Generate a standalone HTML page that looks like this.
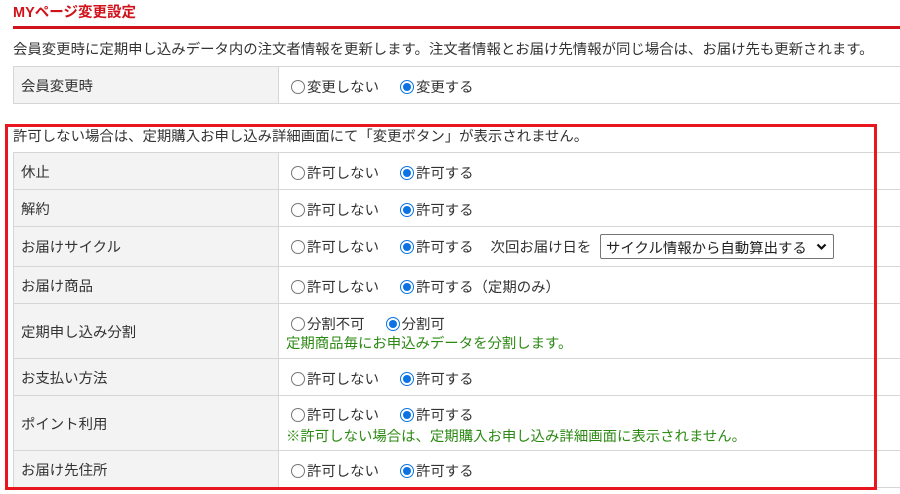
<!DOCTYPE html>
<html><head><meta charset="utf-8"><style>
*{margin:0;padding:0;box-sizing:border-box}
body{width:900px;height:494px;background:#fff;font-family:"Liberation Sans","Noto Sans CJK JP",sans-serif;font-size:14.4px;color:#333;position:relative;overflow:hidden}
.a{position:absolute;white-space:nowrap}
.title{left:13px;top:1px;font-weight:bold;color:#d0121b;font-size:14.5px}
.bar{left:13px;top:26px;width:887px;height:3px;background:#d0121b}
.row{position:absolute;left:13px;width:900px;border-top:1px solid #d6d6d6;border-bottom:1px solid #d6d6d6;border-left:1px solid #d6d6d6}
.row .l{position:absolute;left:0;top:0;bottom:0;width:265px;background:#f3f3f3;border-right:1px solid #d6d6d6;padding-left:7px;display:flex;align-items:center}
.r{display:inline-block;width:14px;height:14px;border:1px solid #767676;border-radius:50%;vertical-align:-2px;margin-right:2px;background:#fff;position:relative}
.r.on{border:1px solid #0b73e3}
.r.on:after{content:"";position:absolute;left:2px;top:2px;width:8px;height:8px;border-radius:50%;background:#0b73e3}
.sp{display:inline-block;width:21px}
.opt{position:absolute;left:277px;white-space:nowrap}
.g{color:#2c8a14}
.sel{position:absolute;left:586px;top:7px;width:234px;height:25px;border:1px solid #767676;border-radius:2px;padding:2px 0 0 5px;font-size:14.4px;color:#222}
.box{position:absolute;left:5px;top:124px;width:872px;height:366px;border:3px solid #e8161f}
</style></head><body>
<div class="a title">MYページ変更設定</div>
<div class="a bar"></div>
<div class="a" style="left:13px;top:38px">会員変更時に定期申し込みデータ内の注文者情報を更新します。注文者情報とお届け先情報が同じ場合は、お届け先も更新されます。</div>
<div class="row" style="top:66px;height:38px"><div class="l">会員変更時</div><div class="opt" style="top:9px"><span class="r"></span>変更しない<span class="sp"></span><span class="r on"></span>変更する</div></div>

<div class="a" style="left:13px;top:125px">許可しない場合は、定期購入お申し込み詳細画面にて「変更ボタン」が表示されません。</div>
<div class="row" style="top:152px;height:38px"><div class="l">休止</div><div class="opt" style="top:9px"><span class="r"></span>許可しない<span class="sp"></span><span class="r on"></span>許可する</div></div>
<div class="row" style="top:189px;height:38px"><div class="l">解約</div><div class="opt" style="top:9px"><span class="r"></span>許可しない<span class="sp"></span><span class="r on"></span>許可する</div></div>
<div class="row" style="top:226px;height:41px"><div class="l">お届けサイクル</div><div class="opt" style="top:9px"><span class="r"></span>許可しない<span class="sp"></span><span class="r on"></span>許可する<span style="display:inline-block;width:17px"></span>次回お届け日を</div><div class="sel">サイクル情報から自動算出する<svg style="position:absolute;right:6px;top:8px" width="11" height="8" viewBox="0 0 11 8"><path d="M1.5 1.5 L5.5 5.5 L9.5 1.5" fill="none" stroke="#111" stroke-width="2.2"/></svg></div></div>
<div class="row" style="top:266px;height:38px"><div class="l">お届け商品</div><div class="opt" style="top:9px"><span class="r"></span>許可しない<span class="sp"></span><span class="r on"></span>許可する（定期のみ）</div></div>
<div class="row" style="top:303px;height:56px"><div class="l">定期申し込み分割</div><div class="opt" style="top:9px"><span class="r"></span>分割不可<span class="sp"></span><span class="r on"></span>分割可</div><div class="opt g" style="top:28px;left:272px">定期商品毎にお申込みデータを分割します。</div></div>
<div class="row" style="top:358px;height:38px"><div class="l">お支払い方法</div><div class="opt" style="top:9px"><span class="r"></span>許可しない<span class="sp"></span><span class="r on"></span>許可する</div></div>
<div class="row" style="top:395px;height:56px"><div class="l">ポイント利用</div><div class="opt" style="top:8px"><span class="r"></span>許可しない<span class="sp"></span><span class="r on"></span>許可する</div><div class="opt g" style="top:29px;left:272px">※許可しない場合は、定期購入お申し込み詳細画面に表示されません。</div></div>
<div class="row" style="top:450px;height:38px"><div class="l">お届け先住所</div><div class="opt" style="top:9px"><span class="r"></span>許可しない<span class="sp"></span><span class="r on"></span>許可する</div></div>
<div class="box"></div>
</body></html>
